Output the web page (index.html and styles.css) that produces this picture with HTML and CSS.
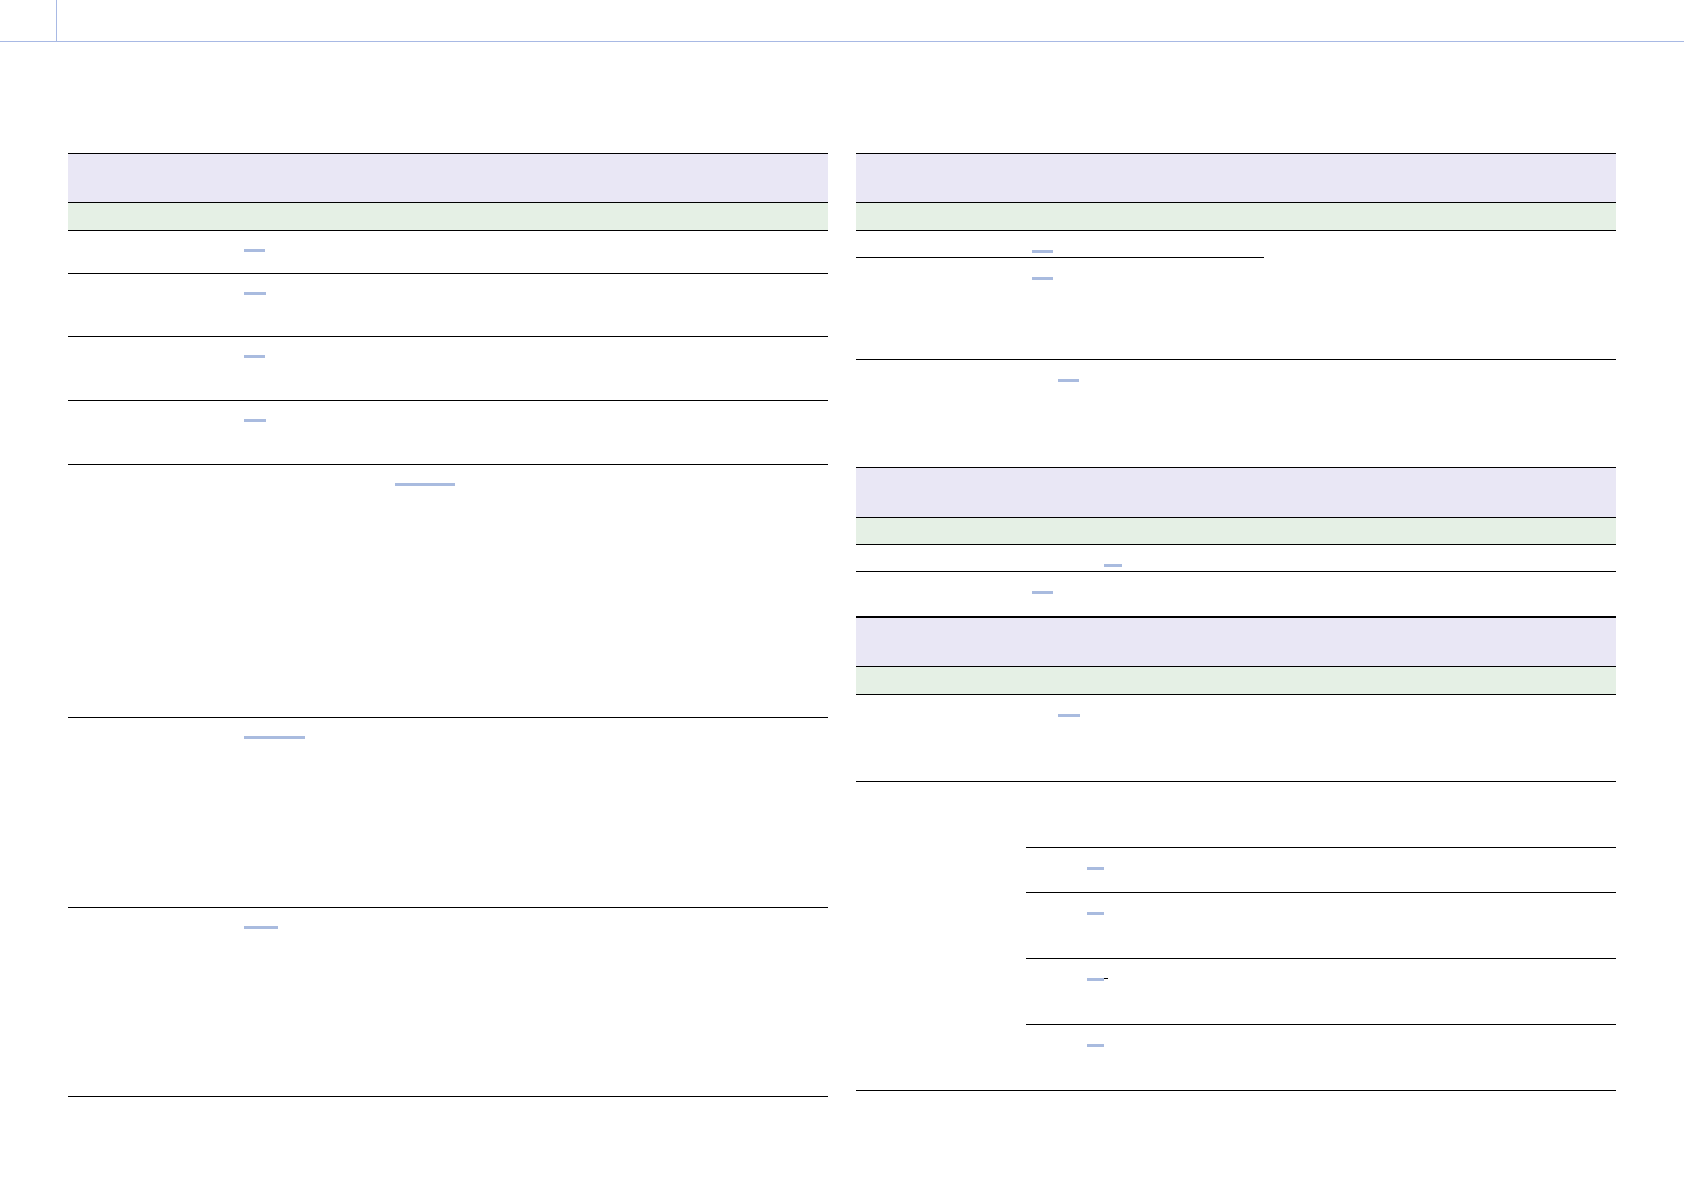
FILE: index.html
```html
<!DOCTYPE html>
<html>
<head>
<meta charset="utf-8">
<link rel="stylesheet" href="styles.css">
</head>
<body>
<div class="topbar"><div class="tab"></div></div>
<div class="page">
  <div class="col">
    <div class="tbl">
      <div class="head h48"></div>
      <div class="sub h27"></div>
      <div class="row l h42"><span class="dash w21 x176"></span></div>
      <div class="row l h62"><span class="dash w22 x176"></span></div>
      <div class="row l h63"><span class="dash w21 x176"></span></div>
      <div class="row l h63"><span class="dash w22 x176"></span></div>
      <div class="row l h252"><span class="dash w60 x327"></span></div>
      <div class="row l h189"><span class="dash w61 x176"></span></div>
      <div class="row l h188"><span class="dash w34 x176"></span></div>
    </div>
  </div>
  <div class="col">
    <div class="tbl">
      <div class="head h48"></div>
      <div class="sub h27"></div>
      <div class="row r h26 partial"><span class="dash w21 x176"></span></div>
      <div class="row r h101"><span class="dash w21 x176"></span></div>
      <div class="row r h107"><span class="dash w21 x202"></span></div>
      <div class="head h49"></div>
      <div class="sub h26"></div>
      <div class="row r h26"><span class="dash w18 x248"></span></div>
      <div class="row r h44 thick"><span class="dash w21 x176"></span></div>
      <div class="head h48"></div>
      <div class="sub h27"></div>
      <div class="row r h86"><span class="dash w22 x202"></span></div>
      <div class="row nest">
        <div class="subcol">
          <div class="srow h65"></div>
          <div class="srow r h44"><span class="dash w17 x61"></span></div>
          <div class="srow r h65"><span class="dash w17 x61"></span></div>
          <div class="srow r h65"><span class="dash w17 x61"></span><span class="tick"></span></div>
          <div class="srow r h65 last"><span class="dash w17 x61"></span></div>
        </div>
      </div>
    </div>
  </div>
</div>
</body>
</html>
```

FILE: styles.css
```css
html, body {
  margin: 0;
  padding: 0;
  background: #ffffff;
  font-family: "Liberation Sans", Arial, sans-serif;
}
.topbar {
  height: 41px;
  border-bottom: 1px solid #a8b9e4;
  display: flex;
}
.tab {
  width: 56px;
  border-right: 1px solid #a8b9e4;
}
.page {
  display: flex;
  gap: 28px;
  padding-left: 68px;
  margin-top: 111px;
}
.col {
  width: 760px;
}
.tbl {
  border-top: 1px solid #000;
}
.head {
  background: #e9e7f5;
  border-bottom: 1px solid #000;
}
.sub {
  background: #e5f0e5;
  border-bottom: 1px solid #000;
}
.row {
  border-bottom: 1px solid #000;
  box-sizing: content-box;
  display: flex;
  align-items: flex-start;
}
.row.l { padding-top: 18px; }
.row.r { padding-top: 19px; }
.row.partial { width: 408px; }
.row.thick { border-bottom-width: 2px; }
.subcol {
  margin-left: 170px;
  flex: 1;
}
.srow {
  border-bottom: 1px solid #000;
  display: flex;
  align-items: flex-start;
  box-sizing: content-box;
}
.srow.r { padding-top: 19px; }
.srow.last { border-bottom: none; }
.dash {
  display: block;
  height: 3px;
  background: #a9bbdf;
  flex: none;
}
.tick {
  display: block;
  width: 4px;
  height: 1px;
  background: #000;
  flex: none;
}
.w17 { width: 17px; }
.w18 { width: 18px; }
.w21 { width: 21px; }
.w22 { width: 22px; }
.w34 { width: 34px; }
.w60 { width: 60px; }
.w61 { width: 61px; }
.x61 { margin-left: 61px; }
.x176 { margin-left: 176px; }
.x202 { margin-left: 202px; }
.x248 { margin-left: 248px; }
.x327 { margin-left: 327px; }
.head.h48 { height: 48px; }
.head.h49 { height: 49px; }
.sub.h26 { height: 26px; }
.sub.h27 { height: 27px; }
.row.l.h42 { height: 24px; }
.row.l.h62 { height: 44px; }
.row.l.h63 { height: 45px; }
.row.l.h252 { height: 234px; }
.row.l.h189 { height: 171px; }
.row.l.h188 { height: 170px; }
.row.r.h26 { height: 7px; }
.row.r.h101 { height: 82px; }
.row.r.h107 { height: 88px; }
.row.r.h44 { height: 25px; }
.row.r.h86 { height: 67px; }
.srow.h65 { height: 65px; }
.srow.r.h44 { height: 25px; }
.srow.r.h65 { height: 46px; }
```
